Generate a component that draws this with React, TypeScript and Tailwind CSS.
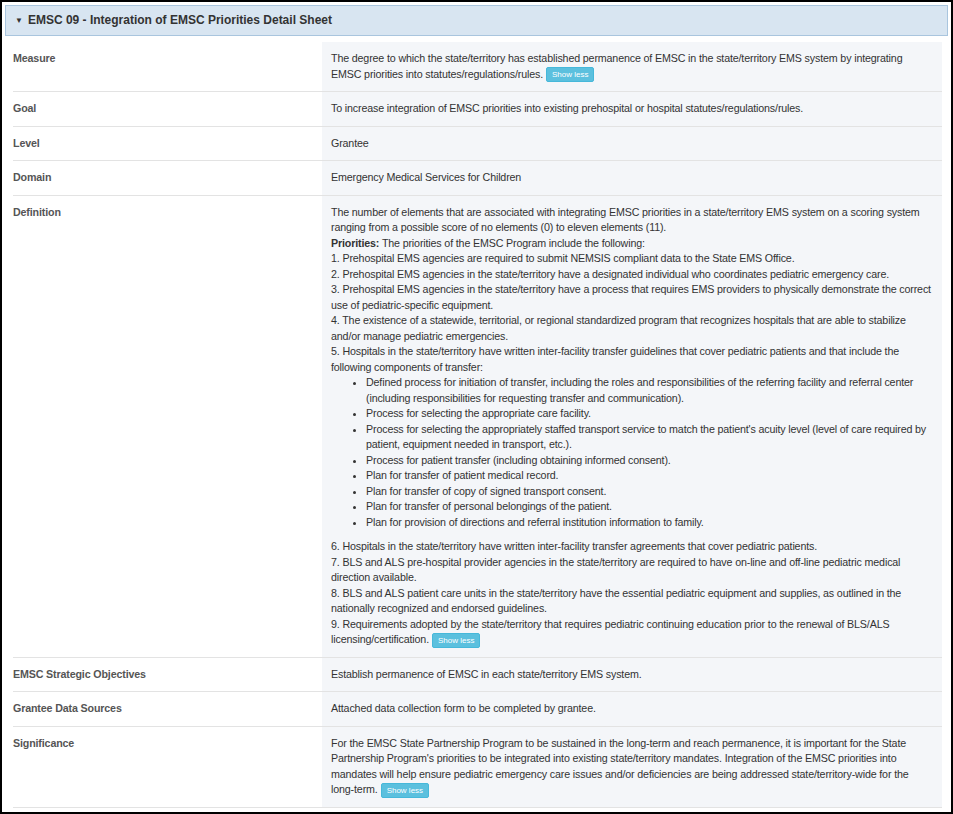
const btn = <span className="inline-block align-middle ml-[3px] bg-[#5bc0de] text-white text-[8px] leading-[13px] px-[5px] rounded-[2px] border border-[#46b8da] tracking-normal">Show less</span>;

function Row({ label, children }: { label: string; children: React.ReactNode }) {
  return (
    <div className="flex border-b border-[#e3e3e3]">
      <div className="w-[309px] shrink-0 px-0 py-[9px] font-bold text-[#555]">{label}</div>
      <div className="flex-1 bg-[#f4f6f9] px-[9px] py-[9px] text-[#333]">{children}</div>
    </div>
  );
}

export default function App() {
  const bullets = [
    "Defined process for initiation of transfer, including the roles and responsibilities of the referring facility and referral center (including responsibilities for requesting transfer and communication).",
    "Process for selecting the appropriate care facility.",
    "Process for selecting the appropriately staffed transport service to match the patient's acuity level (level of care required by patient, equipment needed in transport, etc.).",
    "Process for patient transfer (including obtaining informed consent).",
    "Plan for transfer of patient medical record.",
    "Plan for transfer of copy of signed transport consent.",
    "Plan for transfer of personal belongings of the patient.",
    "Plan for provision of directions and referral institution information to family.",
  ];
  return (
    <div className="w-[953px] h-[814px] border-2 border-black bg-white overflow-hidden text-[10.7px] tracking-[-0.15px] leading-[15.5px]" style={{ fontFamily: '"Liberation Sans", Arial, sans-serif' }}>
      <div className="mx-[3px] mt-[3px] h-[31px] bg-[#d8e5f1] border border-[#a9c5de] flex items-center pl-[9px] text-[12px] tracking-normal font-bold text-[#333]">
        <span className="text-[8px] mr-[5px]">▼</span>EMSC 09 - Integration of EMSC Priorities Detail Sheet
      </div>
      <div className="pl-[11px] pr-[9px] pt-[6px]">
        <Row label="Measure">The degree to which the state/territory has established permanence of EMSC in the state/territory EMS system by integrating EMSC priorities into statutes/regulations/rules.{btn}</Row>
        <Row label="Goal">To increase integration of EMSC priorities into existing prehospital or hospital statutes/regulations/rules.</Row>
        <Row label="Level">Grantee</Row>
        <Row label="Domain">Emergency Medical Services for Children</Row>
        <Row label="Definition">
          <div>The number of elements that are associated with integrating EMSC priorities in a state/territory EMS system on a scoring system ranging from a possible score of no elements (0) to eleven elements (11).</div>
          <div><b>Priorities:</b> The priorities of the EMSC Program include the following:</div>
          <div>1. Prehospital EMS agencies are required to submit NEMSIS compliant data to the State EMS Office.</div>
          <div>2. Prehospital EMS agencies in the state/territory have a designated individual who coordinates pediatric emergency care.</div>
          <div>3. Prehospital EMS agencies in the state/territory have a process that requires EMS providers to physically demonstrate the correct use of pediatric-specific equipment.</div>
          <div>4. The existence of a statewide, territorial, or regional standardized program that recognizes hospitals that are able to stabilize and/or manage pediatric emergencies.</div>
          <div>5. Hospitals in the state/territory have written inter-facility transfer guidelines that cover pediatric patients and that include the following components of transfer:</div>
          <ul className="list-disc pl-[35px] mb-[9px]">
            {bullets.map((b) => <li key={b}>{b}</li>)}
          </ul>
          <div>6. Hospitals in the state/territory have written inter-facility transfer agreements that cover pediatric patients.</div>
          <div>7. BLS and ALS pre-hospital provider agencies in the state/territory are required to have on-line and off-line pediatric medical direction available.</div>
          <div>8. BLS and ALS patient care units in the state/territory have the essential pediatric equipment and supplies, as outlined in the nationally recognized and endorsed guidelines.</div>
          <div>9. Requirements adopted by the state/territory that requires pediatric continuing education prior to the renewal of BLS/ALS licensing/certification.{btn}</div>
        </Row>
        <Row label="EMSC Strategic Objectives">Establish permanence of EMSC in each state/territory EMS system.</Row>
        <Row label="Grantee Data Sources">Attached data collection form to be completed by grantee.</Row>
        <Row label="Significance">For the EMSC State Partnership Program to be sustained in the long-term and reach permanence, it is important for the State Partnership Program's priorities to be integrated into existing state/territory mandates. Integration of the EMSC priorities into mandates will help ensure pediatric emergency care issues and/or deficiencies are being addressed state/territory-wide for the long-term.{btn}</Row>
      </div>
    </div>
  );
}
